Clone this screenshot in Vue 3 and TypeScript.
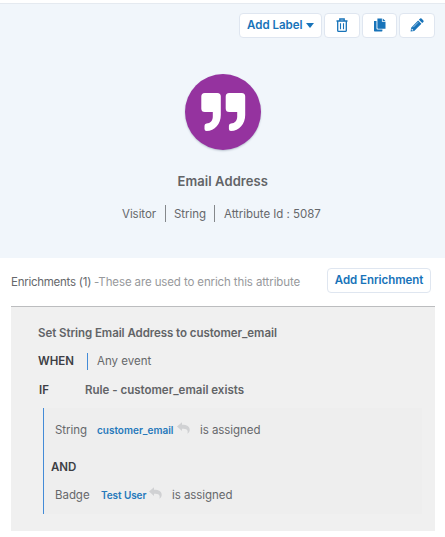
<script setup lang="ts">
interface Rule {
  kind: string
  target: string
  cls: string
}
const rules: Rule[] = [
  { kind: 'String', target: 'customer_email', cls: 'first' },
  { kind: 'Badge', target: 'Test User', cls: 'second' },
]
</script>

<template>
  <main class="page">
    <section class="hero">
      <div class="toolbar">
        <button class="btn label-btn"><span>Add Label</span><i class="caret"></i></button>
        <button class="btn icon-btn" aria-label="Delete">
          <svg width="12" height="14" viewBox="0 0 12 14" fill="none" stroke="currentColor">
            <path d="M.5 3h11M3.8 2.8V1h4.4v1.8M1.7 3.2v9.2q0 .9.9.9h6.8q.9 0 .9-.9V3.2" stroke-width="1.3" />
            <path d="M4.500 5.2v6M7.500 5.2v6" stroke-width="1.1" />
          </svg>
        </button>
        <button class="btn icon-btn" aria-label="Copy">
          <svg width="12" height="14" viewBox="0 0 12 14" fill="currentColor">
            <path d="M3.4.5h4.5v3.2h3.6v7H4.1q-.7 0-.7-.7zM8.7.4l2.8 2.6H8.7z" />
            <path d="M0 3.1h2.5v7.3q0 1.1 1.1 1.1h4.8v1.3q0 .6-.6.6H.7q-.7 0-.7-.7z" />
          </svg>
        </button>
        <button class="btn icon-btn" aria-label="Edit">
          <svg width="14" height="14" viewBox="0 0 14 14" fill="currentColor">
            <path d="M8.1 2.5l3.3 3.3-7.2 7.2-3.6.5.5-3.7zM8.9 1.8l1.2-1.2q.7-.6 1.4 0l1.9 1.9q.6.7 0 1.4l-1.2 1.2z" />
            <path d="M3.2 9.2l5-5" stroke="#fff" stroke-width=".6" />
            <path d="M1.8 10.4l1.8 1.8-1.5.3-.6-.6z" fill="#fff" />
          </svg>
        </button>
      </div>
      <div class="avatar">
        <svg width="76" height="76" viewBox="0 0 76 76">
          <path class="quote" d="M19.800 19h12.500q3.500 0 3.500 3.500V41c0 9.200-6 15.800-14.300 16q-2 0-2-2v-3.300q0-2 2-2.200c4-.2 6.300-3 6.300-7v-4.500h-8q-3.500 0-3.500-3.500v-12q0-3.500 3.500-3.500z" />
          <path class="quote" d="M44.200 19h12.500q3.500 0 3.500 3.500V41c0 9.200-6 15.800-14.300 16q-2 0-2-2v-3.300q0-2 2-2.200c4-.2 6.300-3 6.300-7v-4.500h-8q-3.500 0-3.500-3.500v-12q0-3.500 3.500-3.500z" />
        </svg>
      </div>
      <h1 class="title">Email Address</h1>
      <div class="meta">
        <span class="visitor">Visitor</span>
        <span class="type">String</span>
        <span class="attr">Attribute Id : 5087</span>
      </div>
    </section>

    <header class="enrich">
      <p class="enrich-text"><span class="count">Enrichments (1) </span><span class="hint">-These are used to enrich this attribute</span></p>
      <button class="btn add-enrich">Add Enrichment</button>
    </header>

    <section class="card">
      <div class="row heading"><strong>Set String Email Address to customer_email</strong></div>
      <div class="row when"><b class="key">WHEN</b><span class="event">Any event</span></div>
      <div class="row if"><b class="key">IF</b><strong class="rule-name">Rule - customer_email exists</strong></div>
      <div class="conditions">
        <template v-for="(rule, i) in rules" :key="rule.target">
          <div v-if="i > 0" class="and">AND</div>
          <div class="condition" :class="rule.cls">
            <span class="kind">{{ rule.kind }}</span>
            <a class="target">{{ rule.target }}</a>
            <svg class="reply" width="13" height="12" viewBox="0 0 13 12" fill="#d0d1d3">
              <path d="M0 4.500L5 .3v2.500c5 0 7.700 1.500 7.700 5 0 1.600-.8 2.900-1.800 3.800-.3.200-.5 0-.4-.4.900-3.300-.7-4.500-5.500-4.500v2.400z" />
            </svg>
            <span class="state">is assigned</span>
          </div>
        </template>
      </div>
    </section>
  </main>
</template>

<style>
body { background: #fff; }
</style>
<style scoped>
* { box-sizing: border-box; }
.page { width: 445px; height: 537px; overflow: hidden; padding-top: 3px; background: #fff; font-family: Inter, "Noto Sans", sans-serif; font-size: 12px; color: #66686b; white-space: nowrap; }
.hero { height: 255px; background: #f1f6fb; border-top: 1px solid #e5eaf0; display: flex; flex-direction: column; }
.toolbar { display: flex; justify-content: flex-end; gap: 2px; padding: 9px 10px 0 0; }
.btn { height: 25px; padding: 0; background: #fff; border: 1px solid #dfe6f0; border-radius: 4px; color: #1773b9; font: 600 11.500px Inter, sans-serif; display: flex; align-items: center; }
.label-btn { width: 83px; padding: 0 0 2px 7px; gap: 3px; }
.caret { border: 4px solid transparent; border-top: 5px solid #1773b9; border-bottom: 0; margin-top: 2px; }
.icon-btn { width: 35.660px; justify-content: center; padding-bottom: 2px; }
.avatar { width: 76px; height: 76px; margin: 35.500px 0 0 185px; border-radius: 50%; background: #95339f; box-shadow: 0 1px 2px #b9c3cf; }
.avatar svg { display: block; }
.quote { fill: #fff; }
.title { margin: 21.500px 0 0 177.500px; height: 20px; font-size: 13px; line-height: 21px; font-weight: 600; letter-spacing: .08px; color: #626467; }
.meta { display: flex; height: 17px; margin: 14px 0 0 122px; line-height: 18px; font-size: 11.500px; }
.visitor { width: 43px; letter-spacing: -.05px; }
.type { width: 49px; padding-left: 8px; border-left: 1px solid #85888b; letter-spacing: -.05px; }
.attr { padding-left: 9px; border-left: 1px solid #85888b; letter-spacing: -.04px; }
.enrich { display: flex; height: 48px; padding: 10px 14px 0 11px; justify-content: space-between; }
.enrich-text { margin: 0; font-size: 11.500px; line-height: 28px; white-space: pre; letter-spacing: -.16px; }
.count { letter-spacing: -.26px; }
.hint { color: #97999c; letter-spacing: -.12px; }
.add-enrich { width: 104px; justify-content: center; padding-bottom: 1px; letter-spacing: -.06px; }
.card { width: 424px; height: 225px; margin-left: 11px; background: #f0f0f0; border-top: 1px solid #bcbdbf; padding-top: 15px; }
.row { display: flex; align-items: center; height: 20px; padding-left: 27px; margin-bottom: 9px; }
.row strong { font-weight: 600; font-size: 11.500px; color: #626467; }
.heading strong { letter-spacing: -.06px; padding-top: 1px; }
.key { width: 49px; color: #3c3e44; font-weight: 600; font-size: 11.500px; }
.event { height: 17px; line-height: 17px; padding-left: 9px; border-left: 1px solid #438bd7; font-size: 11.500px; }
.if { padding-left: 28px; margin-bottom: 8px; }
.if .key { width: 46px; }
.conditions { margin-left: 32px; width: 379px; height: 106px; background: #eee; border-left: 1px solid #438bd7; padding-top: 12px; }
.condition { display: flex; height: 20px; align-items: center; padding-left: 11px; font-size: 11.500px; }
.kind { width: 42px; letter-spacing: -.05px; }
.target { width: 80px; color: #2679bb; font-size: 10px; font-weight: 600; margin-top: -1px; }
.reply { margin: -5px 10px 0 0; }
.state { letter-spacing: -.06px; }
.and { height: 20px; margin: 17px 0 8px 7px; line-height: 20px; font-weight: 600; color: #3c3e44; font-size: 11.500px; }
.second .kind { width: 46px; }
.second .target { width: 48px; letter-spacing: -.08px; }
</style>
